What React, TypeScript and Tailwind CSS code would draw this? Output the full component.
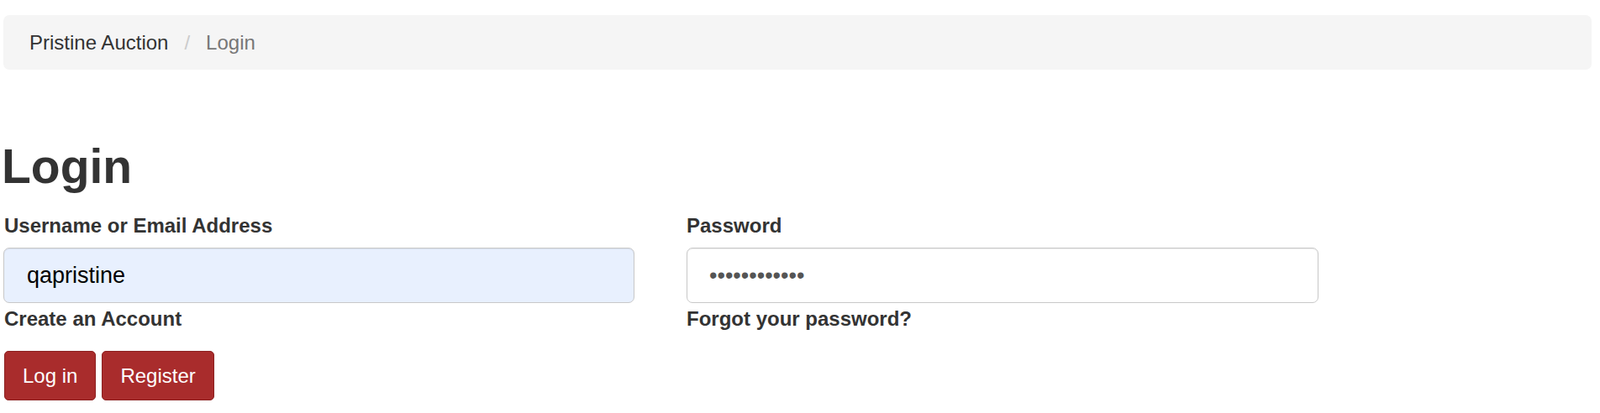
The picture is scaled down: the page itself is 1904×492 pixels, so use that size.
import React from 'react';

const App: React.FC = () => {
  return (
    <div className="min-h-screen bg-white pl-[4px] pr-[10px] pt-[18px] font-['Liberation_Sans',Arial,sans-serif] text-[#333]">
      <nav className="flex h-[65px] items-center rounded-[7px] bg-[#f5f5f5] pl-[31px] text-[24px]">
        <span className="text-[#333]">Pristine Auction</span>
        <span className="px-[19px] text-[#ccc]">/</span>
        <span className="text-[#777]">Login</span>
      </nav>

      <h1 className="mt-[87px] -ml-[2px] text-[57px] font-bold leading-[57px]">Login</h1>

      <form className="mt-[30px]" onSubmit={(e) => e.preventDefault()}>
        <div className="flex gap-[62px]">
          <div className="w-[751px]">
            <label className="block pl-px text-[24px] font-bold leading-[24px]">
              Username or Email Address
            </label>
            <input
              type="text"
              readOnly
              defaultValue="qapristine"
              className="mt-[14px] block h-[66px] w-full rounded-[7px] border border-[#c8c8c8] bg-[#e8f0fe] pl-[27px] text-[27px] text-black shadow-[inset_0_1px_1px_rgba(0,0,0,0.075)] outline-none"
            />
            <a className="mt-[7px] block pl-px text-[24px] font-bold leading-[24px] text-[#333]">
              Create an Account
            </a>
          </div>
          <div className="w-[752px]">
            <label className="block text-[24px] font-bold leading-[24px]">Password</label>
            <input
              type="password"
              readOnly
              defaultValue="qapristine12"
              className="mt-[14px] block h-[66px] w-full rounded-[7px] border border-[#c8c8c8] bg-white pl-[26px] text-[27px] text-[#555] shadow-[inset_0_1px_1px_rgba(0,0,0,0.075)] outline-none"
            />
            <a className="mt-[7px] block text-[24px] font-bold leading-[24px] text-[#333]">
              Forgot your password?
            </a>
          </div>
        </div>

        <div className="mt-[26px] flex gap-[7px] pl-px">
          <button
            type="submit"
            className="h-[59px] rounded-[5px] border border-[#8c2020] bg-[#a92c2c] px-[21px] text-[24px] text-white"
          >
            Log in
          </button>
          <button
            type="button"
            className="h-[59px] rounded-[5px] border border-[#8c2020] bg-[#a92c2c] px-[21px] text-[24px] text-white"
          >
            Register
          </button>
        </div>
      </form>
    </div>
  );
};

export default App;
